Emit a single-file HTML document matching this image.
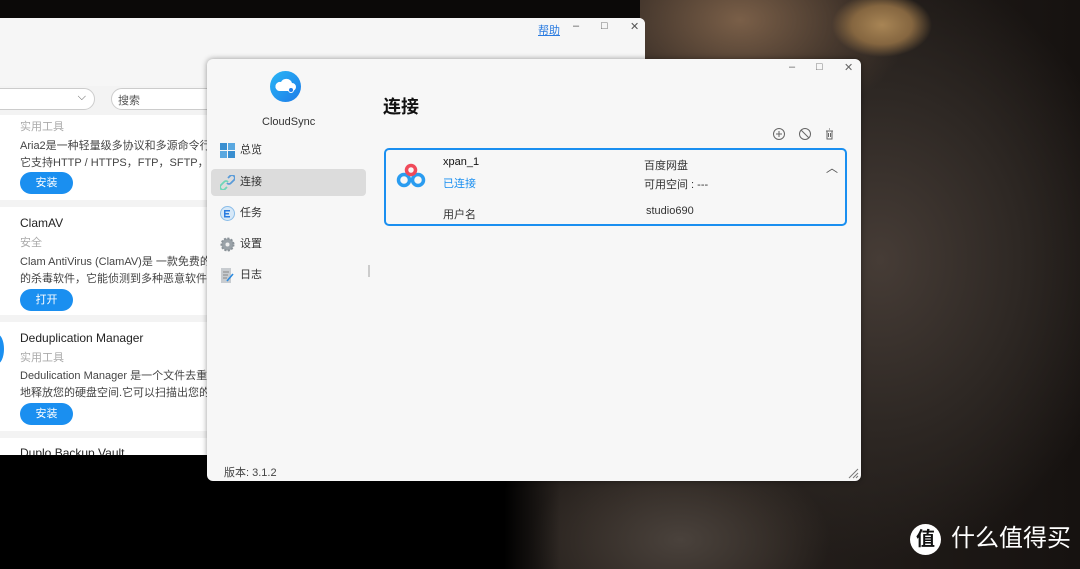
<!DOCTYPE html>
<html style="width:1080px;height:569px;overflow:hidden"><head><meta charset="utf-8"><style>
*{margin:0;padding:0;box-sizing:border-box}
body{width:1080px;height:569px;overflow:hidden;position:relative;font-family:"Liberation Sans","Noto Sans CJK SC",sans-serif;background:#000}
.bg{position:absolute;inset:0;background:
radial-gradient(ellipse 50px 32px at 882px 25px,#a88555 0%,#856640 60%,rgba(0,0,0,0) 100%),
radial-gradient(ellipse 170px 110px at 740px 20px,#7a5f48 0%,rgba(90,70,55,.6) 60%,rgba(0,0,0,0) 100%),
radial-gradient(ellipse 150px 90px at 680px 540px,#4a423c 0%,rgba(60,52,46,.7) 60%,rgba(0,0,0,0) 100%),
radial-gradient(ellipse 250px 300px at 880px 260px,#463c36 0%,#2e2824 55%,rgba(0,0,0,0) 100%),
linear-gradient(90deg,#1a1512 0%,#2a2420 60%,#161210 100%)}
.topblack{position:absolute;left:0;top:0;width:640px;height:18px;background:#0b0908}
.botblack{position:absolute;left:0;top:455px;width:560px;height:114px;background:linear-gradient(90deg,#000 0%,#000 90%,rgba(0,0,0,0) 100%)}
.w1{position:absolute;left:0;top:18px;width:645px;height:437px;background:#f3f3f3;border-radius:0 6px 0 0;overflow:hidden}
.w1 .top{height:68px;background:#f6f6f6}
.help{position:absolute;left:538px;top:4px;font-size:11px;color:#2a7be0;text-decoration:underline}
.ctl{position:absolute;top:2px;font-size:11px;color:#555}
.sel{position:absolute;left:-10px;top:70px;width:105px;height:22px;border:1px solid #ccc;border-radius:11px;background:#fff}
.srch{position:absolute;left:111px;top:70px;width:120px;height:22px;border:1px solid #ccc;border-radius:11px;background:#fff;font-size:11px;color:#555;padding:3px 6px}
.card{position:absolute;left:0;width:645px;background:#fff}
.t{position:absolute;left:20px;font-size:12px;color:#222}
.g{position:absolute;left:20px;font-size:11px;color:#aaa}
.d{position:absolute;left:20px;font-size:11px;color:#444;line-height:17px;white-space:nowrap}
.btn{position:absolute;left:20px;width:53px;height:22px;border-radius:11px;background:#1a8ff0;color:#fff;font-size:11px;text-align:center;line-height:22px}
.w2{position:absolute;left:207px;top:59px;width:654px;height:422px;background:#f7f7f7;border-radius:6px;box-shadow:0 0 6px rgba(0,0,0,.4);overflow:hidden}
.nav{position:absolute;left:4px;width:155px;height:27px;border-radius:4px;font-size:11px;color:#333;padding-left:29px;line-height:27px}
.nav .ic{position:absolute;left:9px;top:6px;width:15px;height:15px}
.hd{position:absolute;left:176px;top:34px;font-size:18px;font-weight:bold;color:#111}
.box{position:absolute;left:177px;top:89px;width:463px;height:78px;border:2px solid #1a8ff0;border-radius:5px}
.s{position:absolute;font-size:11px;color:#333}
</style></head><body>
<div class="bg"></div>
<div class="topblack"></div>
<div class="botblack"></div>
<div class="w1">
 <div class="top"></div>
 <div class="help">帮助</div>
 <div class="ctl" style="left:573px">–</div>
 <div class="ctl" style="left:601px">□</div>
 <div class="ctl" style="left:630px">✕</div>
 <div class="sel"><span style="position:absolute;right:8px;top:2px;font-size:11px;color:#555">⌵</span></div>
 <div class="srch">搜索</div>
 <div class="card" style="top:97px;height:85px">
  <div class="g" style="top:3px">实用工具</div>
  <div class="d" style="top:23px">Aria2是一种轻量级多协议和多源命令行下<br>它支持HTTP / HTTPS，FTP，SFTP，Bit</div>
  <div class="btn" style="top:57px">安装</div>
 </div>
 <div class="card" style="top:189px;height:108px">
  <div class="t" style="top:9px">ClamAV</div>
  <div class="g" style="top:27px">安全</div>
  <div class="d" style="top:47px">Clam AntiVirus (ClamAV)是 一款免费的，<br>的杀毒软件，它能侦测到多种恶意软件，</div>
  <div class="btn" style="top:82px">打开</div>
 </div>
 <div class="card" style="top:304px;height:109px">
  <div style="position:absolute;left:-10px;top:12px;width:14px;height:30px;border-radius:50%;background:#1a8ff0"></div>
  <div class="t" style="top:9px">Deduplication Manager</div>
  <div class="g" style="top:27px">实用工具</div>
  <div class="d" style="top:46px">Dedulication Manager 是一个文件去重工具<br>地释放您的硬盘空间.它可以扫描出您的重</div>
  <div class="btn" style="top:81px">安装</div>
 </div>
 <div class="card" style="top:420px;height:20px">
  <div class="t" style="top:8px">Duplo Backup Vault</div>
 </div>
</div>
<div class="w2">
 <div class="ctl" style="left:582px;top:2px;color:#666">–</div>
 <div class="ctl" style="left:609px;top:2px;color:#666">□</div>
 <div class="ctl" style="left:637px;top:2px;color:#666">✕</div>
 <div style="position:absolute;left:63px;top:12px;width:31px;height:31px;border-radius:50%;background:linear-gradient(135deg,#29b6f6,#1e7be8)">
  <svg width="31" height="31" viewBox="0 0 31 31"><path d="M9 20h13a4 4 0 0 0 0-8 6 6 0 0 0-11-1 4.5 4.5 0 0 0-2 9z" fill="#fff"/><circle cx="21" cy="19" r="2.5" fill="#1e7be8" stroke="#fff" stroke-width="1"/></svg>
 </div>
 <div style="position:absolute;left:55px;top:57px;font-size:11px;color:#333">CloudSync</div>
 <div class="nav" style="top:78px"><svg class="ic" viewBox="0 0 15 15"><rect x="0" y="0" width="7" height="7" fill="#3a8fd0"/><rect x="8" y="0" width="7" height="7" fill="#5aa8e0"/><rect x="0" y="8" width="7" height="7" fill="#5aa8e0"/><rect x="8" y="8" width="7" height="7" fill="#3a8fd0"/></svg>总览</div>
 <div class="nav" style="top:110px;background:#dcdcdc"><svg class="ic" viewBox="0 0 15 15" fill="none" stroke-width="1.8"><path d="M8 3l2-2a2.5 2.5 0 0 1 4 4l-3 3a2.5 2.5 0 0 1-4 0" stroke="#5a9bd8"/><path d="M7 12l-2 2a2.5 2.5 0 0 1-4-4l3-3a2.5 2.5 0 0 1 4 0" stroke="#6fd6b8"/></svg>连接</div>
 <div class="nav" style="top:141px"><svg class="ic" viewBox="0 0 15 15"><circle cx="7.5" cy="7.5" r="7" fill="#d6e8f8" stroke="#8bbde8"/><rect x="4" y="4" width="6" height="1.5" fill="#2a7be0"/><rect x="4" y="7" width="5" height="1.5" fill="#2a7be0"/><rect x="4" y="10" width="6" height="1.5" fill="#2a7be0"/><rect x="4" y="4" width="1.5" height="7.5" fill="#2a7be0"/></svg>任务</div>
 <div class="nav" style="top:172px"><svg class="ic" viewBox="0 0 15 15"><circle cx="7.5" cy="7.5" r="6" fill="#9aa2a8" stroke="#8a9298" stroke-width="2" stroke-dasharray="2 1.5"/><circle cx="7.5" cy="7.5" r="2" fill="#eee"/></svg>设置</div>
 <div class="nav" style="top:203px"><svg class="ic" viewBox="0 0 15 15"><rect x="1" y="0" width="10" height="15" fill="#c8ccd0"/><path d="M3 4h6M3 7h5M3 10h4" stroke="#888"/><path d="M7 13l6-7" stroke="#2a8ae0" stroke-width="1.6"/></svg>日志</div>
 <div style="position:absolute;left:161px;top:206px;width:2px;height:12px;background:#ccc"></div>
 <div style="position:absolute;left:17px;top:405px;font-size:11px;color:#444">版本: 3.1.2</div>
 <div class="hd">连接</div>
 <svg style="position:absolute;left:565px;top:68px" width="62" height="14" viewBox="0 0 62 14" fill="none" stroke="#666" stroke-width="1"><circle cx="7" cy="7" r="5.5"/><path d="M7 4v6M4 7h6"/><circle cx="33" cy="7" r="5.5"/><path d="M29 3l8 8"/><path d="M54 4h7M55 4v8h5V4M57 2h1M56.5 6v4M58.5 6v4"/></svg>
 <div class="box">
  <svg style="position:absolute;left:10px;top:13px" width="32" height="26" viewBox="0 0 32 26"><circle cx="8" cy="17" r="5.5" fill="none" stroke="#2a9cf0" stroke-width="3.5"/><circle cx="22" cy="17" r="5.5" fill="none" stroke="#2a9cf0" stroke-width="3.5"/><circle cx="15" cy="7" r="4.5" fill="none" stroke="#f04a5a" stroke-width="3.5"/></svg>
  <div class="s" style="left:57px;top:6px;color:#111">xpan_1</div>
  <div class="s" style="left:57px;top:25px;color:#1a8ff0">已连接</div>
  <div class="s" style="left:57px;top:56px">用户名</div>
  <div class="s" style="left:258px;top:7px">百度网盘</div>
  <div class="s" style="left:258px;top:26px">可用空间 : ---</div>
  <div class="s" style="left:260px;top:55px">studio690</div>
  <div class="s" style="left:440px;top:9px;font-size:12px;color:#555">︿</div>
 </div>
 <svg style="position:absolute;left:640px;top:408px" width="12" height="12"><path d="M2 11L11 2M6 11l5-5M9 11l2-2" stroke="#777"/></svg>
</div>
<div style="position:absolute;left:910px;top:524px;width:31px;height:31px;border-radius:50%;background:#fff;color:#111;font-size:19px;text-align:center;line-height:31px;font-weight:bold">值</div>
<div style="position:absolute;left:951px;top:524px;font-size:24px;line-height:30px;color:#fff;white-space:nowrap">什么值得买</div>
</body></html>
